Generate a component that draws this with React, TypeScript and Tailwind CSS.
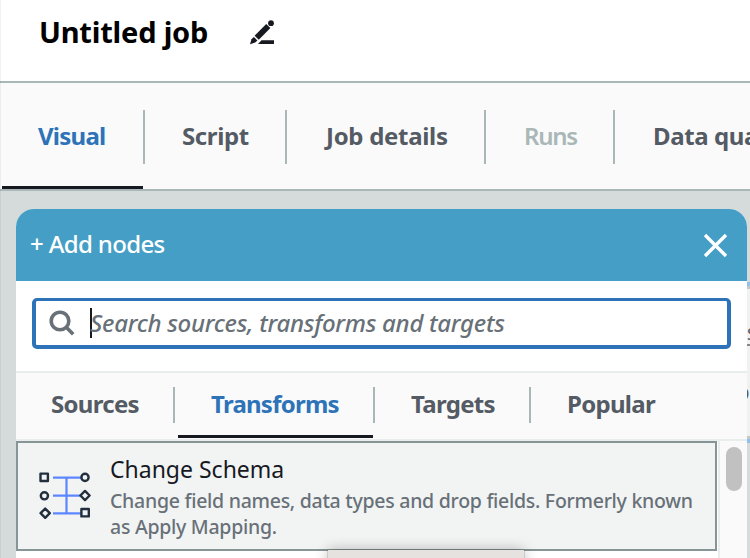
import type { ReactNode } from "react";

function Tab({ children, className }: { children: ReactNode; className: string }) {
  return <div className={`relative shrink-0 whitespace-nowrap ${className}`}>{children}</div>;
}

function Divider({ className }: { className: string }) {
  return <div className={`w-[2px] shrink-0 bg-[#aab7b8] ${className}`} />;
}

function PencilIcon() {
  return (
    <svg width="26" height="28" viewBox="0 0 26 28" fill="#16191f">
      <path d="M5.6 17.7 17.2 5.9l4.2 4.1L9.8 21.7z" />
      <circle cx="22" cy="5.2" r="2.9" />
      <path d="M4.8 18.9 8.4 22.5 6.2 24.6 1 26.3l1.5-5z" />
      <path d="M12.5 22.3H25V26H9z" />
    </svg>
  );
}

function SchemaIcon() {
  return (
    <svg width="52" height="48" viewBox="0 0 52 48" fill="none" strokeWidth="2.4">
      <path d="M14 6.7h28M14 24.6h28M14 42.4h28M27.5 6.5v36" stroke="#5c86ff" strokeWidth="2.2" />
      <g stroke="#232f3e" fill="#f2f4f4" strokeLinejoin="round">
        <rect x="1.5" y="2.6" width="7.4" height="7.4" />
        <circle cx="46" cy="6.4" r="3.6" />
        <circle cx="5.4" cy="24.8" r="3.6" />
        <path d="m46 19.9 4.6 4.6-4.6 4.6-4.6-4.6z" />
        <path d="m6.2 37.6 4.6 4.6-4.6 4.6-4.6-4.6z" />
        <rect x="42.4" y="38" width="7.4" height="7.4" />
      </g>
    </svg>
  );
}

export default function App() {
  return (
    <div className="relative h-[558px] w-[750px] overflow-hidden bg-[#d5dbdb] font-['Noto_Sans',sans-serif] text-[#545b64]">
      <header className="flex h-[83px] border-b-2 border-[#aab7b8] bg-white pl-[39px] pt-[11px]">
        <h1 className="w-[210px] whitespace-nowrap text-[29px] font-bold leading-[42px] tracking-[-0.2px] text-black">Untitled job</h1>
        <div className="pt-[7px]"><PencilIcon /></div>
      </header>
      <nav className="flex h-[108px] border-b-2 border-[#aab7b8] bg-[#fafafa] pl-[2px] text-[24px] font-bold leading-[106px]">
        <Tab className="w-[141px] pl-[36px] tracking-[-0.75px] text-[#2e73b8]">
          Visual
          <div className="absolute bottom-0 left-0 h-[3px] w-full bg-[#16191f]" />
        </Tab>
        <Divider className="mt-[27px] h-[54px]" />
        <Tab className="w-[140px] pl-[37px] tracking-[-0.4px]">Script</Tab>
        <Divider className="mt-[27px] h-[54px]" />
        <Tab className="w-[197px] pl-[39px] tracking-[-0.3px]">Job details</Tab>
        <Divider className="mt-[27px] h-[54px]" />
        <Tab className="w-[127px] pl-[38px] font-semibold tracking-[-1.3px] text-[#aab7b8]">Runs</Tab>
        <Divider className="mt-[27px] h-[54px]" />
        <Tab className="pl-[38px] tracking-[-0.4px]">Data quality</Tab>
      </nav>

      <main className="flex pl-[16px] pt-[18px]">
        <section className="w-[731px] shrink-0 rounded-t-[18px] bg-white">
          <div className="flex h-[72px] items-center justify-between rounded-t-[18px] bg-[#459ec5] pl-[14px] pr-[19px] text-white">
            <span className="whitespace-nowrap pb-[2px] text-[24px] font-medium tracking-[-0.65px]">+ Add nodes</span>
            <svg width="25" height="25" viewBox="0 0 25 25" fill="none" stroke="white" strokeWidth="3.4"><path d="m2 2 21 21M23 2 2 23" /></svg>
          </div>
          <div className="h-[90px] px-4 pt-[17px]">
            <div className="flex h-[51px] items-center rounded-[5px] border-x-4 border-b-4 border-t-[3px] border-[#2e73b8] pl-[13px]">
              <svg width="26" height="26" viewBox="0 0 26 26" fill="none" stroke="#687078" strokeWidth="3.6"><circle cx="11" cy="11" r="8.8" /><path d="m17.2 17.2 7 7" /></svg>
              <div className="ml-[15px] h-[30px] w-[2px] bg-[#16191f]" />
              <span className="-ml-[2px] whitespace-nowrap text-[24px] font-medium italic tracking-[-0.27px] text-[#687078]">Search sources, transforms and targets</span>
            </div>
          </div>
          <nav className="flex h-[70px] border-y-2 border-[#eaeded] bg-[#fafafa] text-[24px] font-bold leading-[62px]">
            <Tab className="w-[157px] pl-[35px] tracking-[-0.7px]">Sources</Tab>
            <Divider className="mt-[14px] h-[36px]" />
            <Tab className="w-[198px] pl-[36px] tracking-[-0.75px] text-[#2e73b8]">
              Transforms
              <div className="absolute bottom-[1px] left-[3px] right-0 h-[3px] bg-[#16191f]" />
            </Tab>
            <Divider className="mt-[14px] h-[36px]" />
            <Tab className="w-[154px] pl-[36px] tracking-[-0.7px]">Targets</Tab>
            <Divider className="mt-[14px] h-[36px]" />
            <Tab className="pl-[36px] tracking-[-0.7px]">Popular</Tab>
          </nav>
          <div className="flex h-[120px]">
            <article className="flex h-[110px] w-[701px] border-2 border-[#879596] bg-[#f2f4f4] pl-[21px]">
              <div className="w-[71px] pt-[28px]"><SchemaIcon /></div>
              <div className="whitespace-nowrap">
                <h2 className="pt-[10px] text-[23px] leading-[32px] text-[#16191f]">Change Schema</h2>
                <p className="mt-[3px] text-[19.5px] font-medium leading-[26px] tracking-[-0.27px] text-[#687078]">
                  Change field names, data types and drop fields. Formerly known<br />
                  as Apply Mapping.
                </p>
              </div>
            </article>
            <div className="ml-[1px] w-[29px] border-l-2 border-[#eaeded] bg-[#fafafa] pl-[6px] pt-[6px]">
              <div className="h-[44px] w-[16px] rounded-full bg-[#c1c1c1]" />
            </div>
          </div>
        </section>
        <aside className="w-[3px] overflow-hidden pt-[73px]">
          <div className="h-[157px] border-b-[3px] border-t-4 border-b-[#c3c9c9] border-t-[#8fc1ec] bg-[#f0f1f1]">
            <div className="h-[3px] bg-[#c3c9c9]" />
            <div className="pt-[34px] text-[17px] leading-[21px]">S</div>
            <div className="h-[2px] bg-[#888]" />
            <div className="-ml-[12px] mt-[33px] text-[20px] leading-[30px]">D</div>
          </div>
          <div className="h-[4px] bg-[#8fc1ec]" />
        </aside>
      </main>
      <div className="absolute left-[328px] top-[550px] h-5 w-[196px] bg-[#e6e2e0] shadow-[0_0_14px_rgba(0,0,0,0.28),0_0_1px_#555]" />
      <div className="absolute inset-y-0 left-0 w-px bg-black/5" />
    </div>
  );
}
